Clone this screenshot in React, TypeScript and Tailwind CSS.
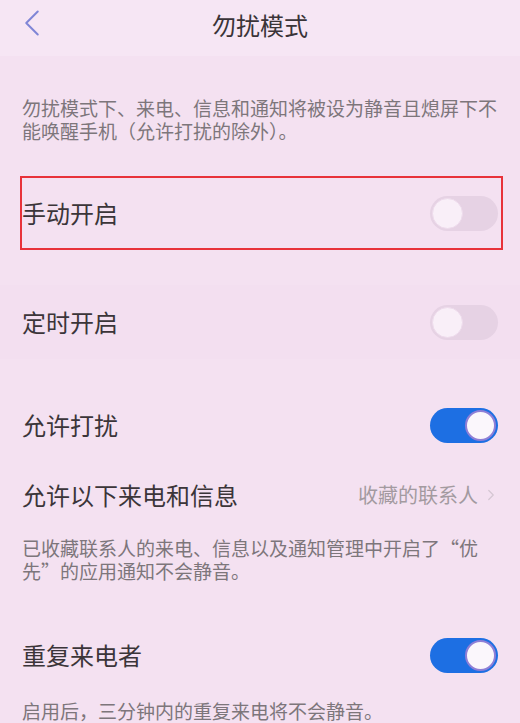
import { ChevronLeft, ChevronRight } from 'lucide-react';

const cjk = { fontFamily: '"Noto Sans CJK SC", "Noto Sans", sans-serif' };

function Toggle({ on }: { on: boolean }) {
  if (on) {
    return (
      <div className="flex h-[35px] w-[68px] items-center justify-end rounded-full bg-[#1d6fe3] pr-[2px]">
        <div className="h-[31px] w-[31px] rounded-full border-2 border-[#8f7fd6] bg-[#fbf7fc]" />
      </div>
    );
  }
  return (
    <div className="flex h-[35px] w-[68px] items-center rounded-full bg-[#e6d2e4] pl-[2px]">
      <div className="h-[31px] w-[31px] rounded-full border border-[#eedbec] bg-[#f9eff8]" />
    </div>
  );
}

function Row({ title, on, className = '' }: { title: string; on: boolean; className?: string }) {
  return (
    <div className={`flex h-[74px] items-center justify-between px-[22px] ${className}`}>
      <span className="text-[24px] text-[#3b3539]">{title}</span>
      <Toggle on={on} />
    </div>
  );
}

function Note({ children, className = '' }: { children: React.ReactNode; className?: string }) {
  return <p className={`px-[22px] text-[19px] leading-[23px] text-[#7d767b] ${className}`}>{children}</p>;
}

export default function App() {
  return (
    <div className="h-[723px] w-[520px] overflow-hidden bg-[#f4e1f1]" style={cjk}>
      {/* header */}
      <div className="relative flex h-[56px] justify-center bg-[#f6e6f4] pt-[10px]">
        <ChevronLeft className="absolute left-[9px] top-0 h-[46px] w-[46px] text-[#7f86d6]" strokeWidth={1.05} />
        <h1 className="text-[24px] leading-[30px] text-[#3a3438]">勿扰模式</h1>
      </div>

      <Note className="pt-[40px]">勿扰模式下、来电、信息和通知将被设为静音且熄屏下不能唤醒手机（允许打扰的除外）。</Note>

      <div className="relative mt-[34px]">
        <Row title="手动开启" on={false} />
        <div className="pointer-events-none absolute inset-y-0 left-[20px] right-[17px] border-[2.5px] border-[#e8323a]" />
      </div>

      <div className="mt-[35px] bg-[#f3dff0]">
        <Row title="定时开启" on={false} />
      </div>

      <div className="mt-[29px]">
        <Row title="允许打扰" on />
        <div className="flex h-[66px] items-center justify-between pl-[22px] pr-[20px]">
          <span className="text-[24px] text-[#3b3539]">允许以下来电和信息</span>
          <span className="flex items-center text-[20px] text-[#a39aa0]">
            收藏的联系人
            <ChevronRight className="ml-[4px] h-[18px] w-[18px] text-[#d4c6d2]" strokeWidth={1.6} />
          </span>
        </div>
        <Note className="pt-[8px]">已收藏联系人的来电、信息以及通知管理中开启了“优先”的应用通知不会静音。</Note>
      </div>

      <div className="mt-[36px]">
        <Row title="重复来电者" on />
        <Note className="pt-[7px]">启用后，三分钟内的重复来电将不会静音。</Note>
      </div>
    </div>
  );
}
